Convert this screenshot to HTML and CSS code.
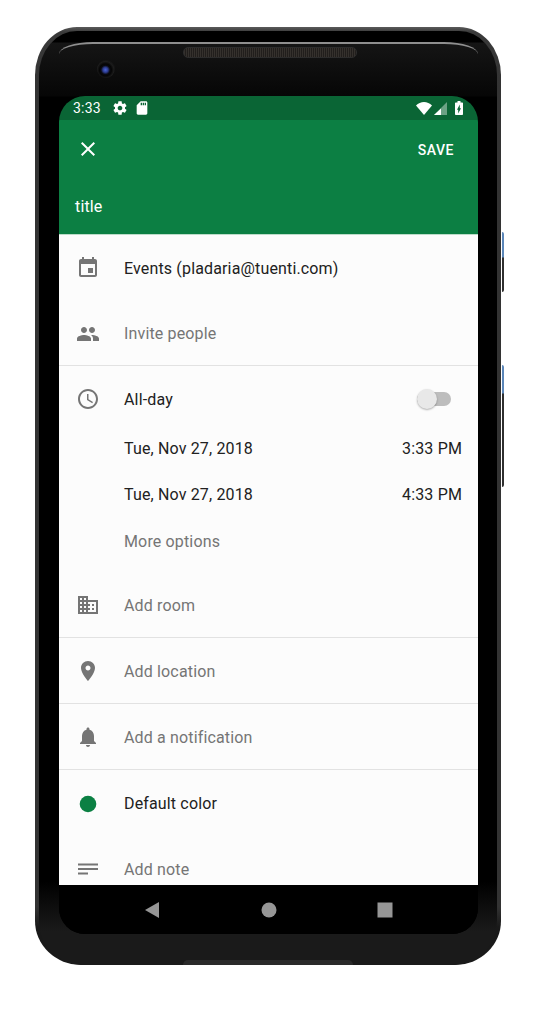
FILE: index.html
```html
<!DOCTYPE html>
<html lang="en">
  <head>
    <meta charset="UTF-8" />
    <title>New event</title>
    <link rel="stylesheet" href="styles.css">
  </head>
  <body>
    <div class="phone">
      <span class="side-key side-key-power"></span>
      <span class="side-key side-key-volume"></span>
      <div class="bezel-top">
        <span class="speaker"></span>
        <span class="camera"></span>
      </div>
      <span class="speaker-bottom"></span>

      <div class="screen">
        <div class="status-bar">
          <span class="clock">3:33</span>
          <svg class="status-icon status-gear" viewBox="0 0 24 24"><path d="M19.43 12.98c.04-.32.07-.64.07-.98s-.03-.66-.07-.98l2.11-1.65c.19-.15.24-.42.12-.64l-2-3.46c-.12-.22-.39-.3-.61-.22l-2.49 1c-.52-.4-1.08-.73-1.69-.98l-.38-2.65C14.46 2.18 14.25 2 14 2h-4c-.25 0-.46.18-.49.42l-.38 2.65c-.61.25-1.17.59-1.69.98l-2.49-1c-.23-.09-.49 0-.61.22l-2 3.46c-.13.22-.07.49.12.64l2.11 1.65c-.04.32-.07.65-.07.98s.03.66.07.98l-2.11 1.65c-.19.15-.24.42-.12.64l2 3.46c.12.22.39.3.61.22l2.49-1c.52.4 1.08.73 1.69.98l.38 2.65c.03.24.24.42.49.42h4c.25 0 .46-.18.49-.42l.38-2.65c.61-.25 1.17-.59 1.69-.98l2.49 1c.23.09.49 0 .61-.22l2-3.46c.12-.22.07-.49-.12-.64l-2.11-1.65zM12 15.5c-1.93 0-3.5-1.57-3.5-3.5s1.57-3.5 3.5-3.5 3.5 1.57 3.5 3.5-1.57 3.5-3.5 3.5z"/></svg>
          <svg class="status-icon status-sd" viewBox="0 0 24 24"><path d="M18 2h-8L4.02 8 4 20c0 1.1.9 2 2 2h12c1.1 0 2-.9 2-2V4c0-1.1-.9-2-2-2zm-6 6h-2V4h2v4zm3 0h-2V4h2v4zm3 0h-2V4h2v4z"/></svg>
          <span class="status-spacer"></span>
          <svg class="status-wifi" viewBox="0 0 16 13"><path d="M0 3.400C2.200 1.300 5 0 8 0s5.800 1.300 8 3.400L8 13z"/></svg>
          <svg class="status-signal" viewBox="0 0 13 13"><path d="M13 0v13H0z" opacity="0.4"/><path d="M7 6.500V13H0z"/></svg>
          <svg class="status-battery" viewBox="0 0 8 14"><path d="M7 1.500H5.500V0h-3v1.500H1c-.55 0-1 .45-1 1V13c0 .55.45 1 1 1h6c.55 0 1-.45 1-1V2.500c0-.55-.45-1-1-1zM3.200 12.500V8.800H2L4.800 3.500v3.700H6z"/></svg>
        </div>

        <div class="app-bar">
          <div class="app-bar-top">
            <svg class="icon icon-light" viewBox="0 0 24 24"><path d="M19 6.410L17.590 5 12 10.590 6.410 5 5 6.410 10.590 12 5 17.590 6.410 19 12 13.410 17.590 19 19 17.590 13.410 12z"/></svg>
            <span class="save">SAVE</span>
          </div>
          <div class="event-title">title</div>
        </div>

        <div class="form">
          <div class="row row-tall row-calendar">
            <svg class="icon" viewBox="0 0 24 24"><path d="M17 12h-5v5h5v-5zM16 1v2H8V1H6v2H5c-1.110 0-1.990.9-1.990 2L3 19c0 1.100.89 2 2 2h14c1.100 0 2-.9 2-2V5c0-1.100-.9-2-2-2h-1V1h-2zm3 18H5V8h14v11z"/></svg>
            <span class="label">Events (pladaria@tuenti.com)</span>
          </div>
          <div class="row row-tall row-invite row-divided">
            <svg class="icon" viewBox="0 0 24 24"><path d="M16 11c1.660 0 2.990-1.340 2.990-3S17.660 5 16 5c-1.660 0-3 1.340-3 3s1.340 3 3 3zm-8 0c1.660 0 2.990-1.340 2.990-3S9.660 5 8 5C6.340 5 5 6.340 5 8s1.340 3 3 3zm0 2c-2.330 0-7 1.170-7 3.500V19h14v-2.500c0-2.330-4.670-3.500-7-3.500zm8 0c-.29 0-.62.02-.97.05 1.160.84 1.970 1.970 1.970 3.450V19h6v-2.500c0-2.330-4.670-3.500-7-3.500z"/></svg>
            <span class="label label-muted">Invite people</span>
          </div>

          <div class="row row-allday">
            <svg class="icon" viewBox="0 0 24 24"><path d="M11.990 2C6.470 2 2 6.480 2 12s4.470 10 9.990 10C17.520 22 22 17.520 22 12S17.520 2 11.990 2zM12 20c-4.420 0-8-3.580-8-8s3.580-8 8-8 8 3.580 8 8-3.580 8-8 8zm.5-13H11v6l5.250 3.150.75-1.230-4.500-2.670z"/></svg>
            <span class="label">All-day</span>
            <span class="switch"><span class="switch-thumb"></span></span>
          </div>
          <div class="row row-date">
            <span class="label label-indent">Tue, Nov 27, 2018</span>
            <span class="time">3:33 PM</span>
          </div>
          <div class="row row-date">
            <span class="label label-indent">Tue, Nov 27, 2018</span>
            <span class="time">4:33 PM</span>
          </div>
          <div class="row row-date">
            <span class="label label-indent label-muted">More options</span>
          </div>

          <div class="row row-tall row-room row-divided">
            <svg class="icon" viewBox="0 0 24 24"><path d="M12 7V3H2v18h20V7H12zM6 19H4v-2h2v2zm0-4H4v-2h2v2zm0-4H4V9h2v2zm0-4H4V5h2v2zm4 12H8v-2h2v2zm0-4H8v-2h2v2zm0-4H8V9h2v2zm0-4H8V5h2v2zm10 12h-8v-2h2v-2h-2v-2h2v-2h-2V9h8v10zm-2-8h-2v2h2v-2zm0 4h-2v2h2v-2z"/></svg>
            <span class="label label-muted">Add room</span>
          </div>
          <div class="row row-tall row-divided">
            <svg class="icon" viewBox="0 0 24 24"><path d="M12 2C8.130 2 5 5.130 5 9c0 5.250 7 13 7 13s7-7.750 7-13c0-3.870-3.130-7-7-7zm0 9.500c-1.380 0-2.500-1.120-2.500-2.500s1.120-2.500 2.500-2.500 2.500 1.120 2.500 2.500-1.120 2.500-2.500 2.500z"/></svg>
            <span class="label label-muted">Add location</span>
          </div>
          <div class="row row-tall row-divided">
            <svg class="icon" viewBox="0 0 24 24"><path d="M12 22c1.100 0 2-.9 2-2h-4c0 1.100.89 2 2 2zm6-6v-5c0-3.070-1.640-5.640-4.500-6.320V4c0-.83-.67-1.500-1.500-1.500s-1.500.67-1.500 1.500v.68C7.630 5.360 6 7.920 6 11v5l-2 2v1h16v-1l-2-2z"/></svg>
            <span class="label label-muted">Add a notification</span>
          </div>
          <div class="row row-tall">
            <svg class="icon icon-green" viewBox="0 0 24 24"><circle cx="12" cy="12" r="8.300"/></svg>
            <span class="label">Default color</span>
          </div>
          <div class="row row-tall">
            <svg class="icon" viewBox="0 0 24 24"><path d="M2 5.600h20v1.800H2zM2 10.100h20v1.800H2zM2 14.600h10v1.800H2z"/></svg>
            <span class="label label-muted">Add note</span>
          </div>
        </div>

        <div class="nav-bar">
          <svg class="nav-icon" viewBox="0 0 16 18"><path d="M15 1v16L1 9z"/></svg>
          <svg class="nav-icon" viewBox="0 0 16 18"><circle cx="8" cy="9" r="7.500"/></svg>
          <svg class="nav-icon" viewBox="0 0 16 18"><path d="M.5 1.500h15v15H.5z"/></svg>
        </div>
      </div>
    </div>
  </body>
</html>
```

FILE: styles.css
```css
* {
  box-sizing: border-box;
}
body {
  margin: 0;
  background: #fff;
  font-family: Roboto, "Liberation Sans", sans-serif;
  color: #212121;
  overflow: hidden;
}
.phone {
  position: relative;
  width: 466px;
  height: 938px;
  margin: 27px 0 0 35px;
  padding: 69px 23px 31px 24px;
  background: linear-gradient(#5a5a5a 0, #3a3a3a 5px, #333 60px, #333 880px, #191919 900px);
  border-radius: 42px 42px 46px 46px / 48px 48px 44px 44px;
}
/* black body inside the metal band */
.phone::before {
  content: "";
  position: absolute;
  top: 4px;
  right: 4px;
  bottom: 0;
  left: 4px;
  background: linear-gradient(#000 0, #000 11px, #151515 12px, #060606 65px, #000 66px, #000 850px, #1a1a1a 900px);
  border-radius: 38px 38px 44px 44px / 44px 44px 44px 44px;
}
.bezel-top {
  position: absolute;
  top: 15px;
  left: 24px;
  right: 23px;
  height: 54px;
  border-top: 2px solid #8f8f8f;
  border-radius: 34px 34px 0 0 / 12px 12px 0 0;
}
.speaker {
  position: absolute;
  top: 3px;
  left: 124px;
  width: 174px;
  height: 11px;
  background: repeating-linear-gradient(90deg, #35312d 0, #35312d 1px, #211e1c 1px, #211e1c 2px);
  border: 1px solid #2c2c2c;
  border-radius: 5px;
}
.camera {
  position: absolute;
  top: 16px;
  left: 38px;
  width: 18px;
  height: 18px;
  background: radial-gradient(circle at 47% 55%, #4a64d8 0, #2d3c90 2.500px, #090a10 4.500px, #050505 6px, #1d1d1d 8.500px, #161616 9px);
  border-radius: 50%;
}
.speaker-bottom {
  position: absolute;
  bottom: 0;
  left: 148px;
  width: 170px;
  height: 5px;
  background: #2a2a2a;
  border-radius: 5px 5px 0 0;
}
.side-key {
  position: absolute;
  right: -3px;
  width: 2px;
  border-radius: 0 2px 2px 0;
}
.side-key-power {
  top: 205px;
  height: 60px;
  background: linear-gradient(#5b86b8 0, #5b86b8 25px, #303030 26px);
}
.side-key-volume {
  top: 338px;
  height: 122px;
  background: linear-gradient(#5b86b8 0, #5b86b8 28px, #303030 29px);
}

.screen {
  position: relative;
  display: flex;
  flex-direction: column;
  height: 838px;
  background: #000;
  border-radius: 26px;
  overflow: hidden;
}
.status-bar {
  display: flex;
  align-items: center;
  height: 24px;
  padding: 0 15px 0 14px;
  background: #0a6535;
  color: #fff;
  fill: #fff;
}
.clock {
  width: 28px;
  font-size: 14px;
  letter-spacing: 0.2px;
}
.status-icon {
  width: 16px;
  height: 16px;
}
.status-gear {
  margin-left: 11px;
}
.status-sd {
  margin-left: 6px;
}
.status-spacer {
  flex: 1;
}
.status-wifi {
  width: 16px;
  height: 13px;
}
.status-signal {
  width: 13px;
  height: 13px;
  margin-left: 2px;
}
.status-battery {
  width: 8px;
  height: 14px;
  margin-left: 8px;
}

.app-bar {
  height: 114px;
  background: #0c7f43;
  color: #fff;
}
.app-bar-top {
  display: flex;
  align-items: center;
  justify-content: space-between;
  height: 58px;
  padding: 0 24px 0 17px;
}
.save {
  padding-top: 1px;
  font-size: 14px;
  font-weight: 500;
  letter-spacing: 0.5px;
}
.event-title {
  margin-top: 15px;
  padding-left: 16px;
  font-size: 16px;
  line-height: 28px;
  letter-spacing: 0.15px;
}

.form {
  flex: 1;
  min-height: 0;
  overflow: hidden;
  background: #fcfcfc;
  border-top: 1px solid #bcdcc9;
}
.row {
  display: flex;
  align-items: center;
  padding: 0 16px 0 17px;
  font-size: 16px;
  letter-spacing: 0.15px;
}
.row-tall {
  height: 66px;
  padding-top: 1px;
}
.row-divided {
  border-bottom: 1px solid #e2e2e2;
}
.row-calendar {
  height: 65px;
}
.row-invite {
  padding-top: 2px;
}
.row-allday {
  height: 59px;
  padding-top: 7px;
}
.row-date {
  height: 46.500px;
}
.row-room {
  margin-top: 7.500px;
}
.icon {
  flex: none;
  width: 24px;
  height: 24px;
  margin: 0 24.500px 0 -0.500px;
  fill: #757575;
}
.icon-light {
  margin: 0;
  fill: #fff;
}
.icon-green {
  fill: #0b8043;
}
.label {
  flex: 1;
}
.label-muted {
  color: #757575;
}
.label-indent {
  padding-left: 48px;
}
.time {
  color: #212121;
}
.switch {
  position: relative;
  width: 34px;
  height: 14px;
  margin-right: 11px;
  background: #bdbdbd;
  border-radius: 7px;
}
.switch-thumb {
  position: absolute;
  top: -3px;
  left: 0;
  width: 20px;
  height: 20px;
  background: #e8e8e8;
  border-radius: 50%;
  box-shadow: 0 1px 2px rgba(0, 0, 0, 0.3);
}

.nav-bar {
  display: flex;
  flex: none;
  align-items: center;
  justify-content: space-between;
  height: 49px;
  padding: 0 85px;
  background: #000;
}
.nav-icon {
  width: 16px;
  height: 18px;
  fill: #969696;
}
```
